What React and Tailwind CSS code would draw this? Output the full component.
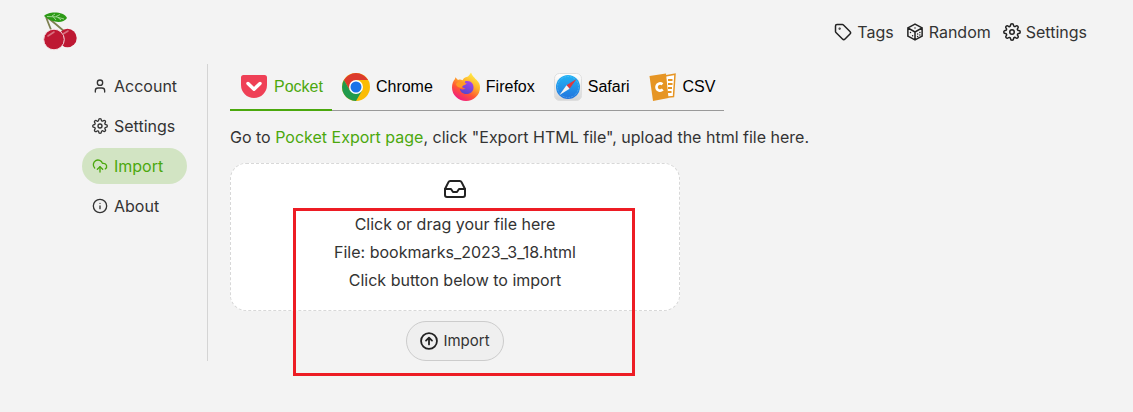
import { Tag, User, Info, Inbox, CloudUpload } from "lucide-react";
import { FiSettings } from "react-icons/fi";

function CherryLogo() {
  return (
    <svg width="36" height="40" viewBox="0 0 36 40" aria-hidden="true">
      <path d="M3 5 Q6 13 9 20 M4 5 Q14 13 22 20" fill="none" stroke="#7d8050" strokeWidth="1.8" />
      <path d="M1 4 C5 -1 21 -1 24 6 C20 12 9 11 1 4Z" fill="#2c9a16" />
      <path d="M4 4.500 Q14 4 21 7 M9 4 L12 2 M13 4.500 L17 2.500 M10 4.500 L13 8 M15 5.500 L18 8" fill="none" stroke="#b9e3ad" strokeWidth="0.800" />
      <circle cx="24.500" cy="26" r="9.200" fill="#be1833" />
      <circle cx="11" cy="27.500" r="10.300" fill="#be1833" stroke="#f3dfe2" strokeWidth="1" />
      <path d="M5 24 L11 20 M20 22 L25 19" stroke="#d8717f" strokeWidth="1.600" strokeLinecap="round" />
    </svg>
  );
}

function DiceIcon() {
  return (
    <svg width="18" height="18" viewBox="0 0 24 24" fill="none" stroke="#222" strokeWidth="2" strokeLinejoin="round" strokeLinecap="round" aria-hidden="true">
      <path d="M12 1.500 21.500 6.500v11L12 22.500 2.500 17.500v-11zM2.500 6.500 12 12l9.500-5.500M12 12v10.500" />
      <path d="M12 6.500v.1M6 12.500v.1M8.800 17v.1M15.500 14.500v.1M18.500 12.500v.1M15.500 18v.1M18.500 16v.1" />
    </svg>
  );
}

function ArrowUpCircle() {
  return (
    <svg width="18" height="18" viewBox="0 0 24 24" fill="none" stroke="#222" strokeWidth="2.400" strokeLinecap="round" strokeLinejoin="round" aria-hidden="true">
      <circle cx="12" cy="12" r="10.600" />
      <path d="M12 16.500V8M8 11.500l4-4 4 4" />
    </svg>
  );
}

function PocketLogo() {
  return (
    <svg width="28" height="28" viewBox="0 0 28 28" aria-hidden="true">
      <path d="M3.500 2h21A2.500 2.500 0 0 1 27 4.500V12a13 13 0 0 1-26 0V4.500A2.500 2.500 0 0 1 3.500 2Z" fill="#ef4056" />
      <path d="M8 10.500l6 5.700 6-5.700" fill="none" stroke="#fff" strokeWidth="3.400" strokeLinecap="round" strokeLinejoin="round" />
    </svg>
  );
}

function ChromeLogo() {
  return (
    <svg width="28" height="28" viewBox="0 0 28 28" aria-hidden="true">
      <circle cx="14" cy="14" r="14" fill="#fbbc04" />
      <path d="M14 14 8 17.500 1.900 7A14 14 0 0 1 26.100 7H14Z" fill="#dc3a2c" />
      <path d="M1.900 7A14 14 0 0 0 14 28l6.100-10.500L14 14 8 17.500Z" fill="#219a4c" />
      <circle cx="14" cy="14" r="7" fill="#fff" />
      <circle cx="14" cy="14" r="5.500" fill="#1a73e8" />
    </svg>
  );
}

function FirefoxLogo() {
  return (
    <svg width="28" height="30" viewBox="1 0 28 30" aria-hidden="true">
      <defs>
        <linearGradient id="flame" x1="0.800" y1="0.050" x2="0.250" y2="1">
          <stop offset="0" stopColor="#fff04a" />
          <stop offset="0.350" stopColor="#ffb32a" />
          <stop offset="0.650" stopColor="#ff5634" />
          <stop offset="1" stopColor="#f0148a" />
        </linearGradient>
        <linearGradient id="globe" x1="0.700" y1="0" x2="0.300" y2="1">
          <stop offset="0" stopColor="#a545ee" />
          <stop offset="1" stopColor="#5547c8" />
        </linearGradient>
      </defs>
      <path d="M20 0.500c1 3 3 4.500 4.500 6.500 1 .6 1.500 1.500 1.500 1.500C28 10.500 29 12 29 15.500a14 13.500 0 0 1-28 0C1 12 2 9 4 7l.3-1.800L7 8c2-.7 3-.5 4.500.2C13 5.500 15 5 17 4.500 18 3.500 19 2 20 .5Z" fill="url(#flame)" />
      <path d="M16.500 9c4 0 6 3 6 6.500 0 4-3 6.500-7 6.500s-6.500-2.500-6.700-5.500c1.500 1.300 4 1.300 5.700 0-2-.3-3.500-1.200-3.700-2.500 1.500-.8 3.200-.8 4-2-1.300-.6-1-2-.3-3Z" fill="url(#globe)" />
      <path d="M5 12c1.500-2 4-2.800 7-1.500l4 1-4 2-1.500 2.500C8 15 6 15.500 5 12Z" fill="#ff9a25" />
    </svg>
  );
}

function SafariLogo() {
  return (
    <svg width="28" height="28" viewBox="0 0 28 28" aria-hidden="true">
      <defs>
        <linearGradient id="sky" x1="0" y1="0" x2="0" y2="1">
          <stop offset="0" stopColor="#20b4f5" />
          <stop offset="1" stopColor="#2373dd" />
        </linearGradient>
        <linearGradient id="tile" x1="0" y1="0" x2="0" y2="1">
          <stop offset="0" stopColor="#ffffff" />
          <stop offset="1" stopColor="#d5d5d5" />
        </linearGradient>
      </defs>
      <rect x="0.500" y="0.500" width="27" height="27" rx="5" fill="url(#tile)" stroke="#dedede" />
      <circle cx="14" cy="14" r="12" fill="url(#sky)" />
      <circle cx="14" cy="14" r="10.500" fill="none" stroke="#7cc8f8" strokeWidth="0.800" strokeDasharray="0.600 1" />
      <path d="M22.500 6 12.500 12.200 15.600 15.700Z" fill="#e0383d" />
      <path d="M5.500 22 12.500 12.200 15.600 15.700Z" fill="#f4f4f4" />
    </svg>
  );
}

function CsvLogo() {
  return (
    <svg width="28" height="28" viewBox="0 0 28 28" aria-hidden="true">
      <path d="M16 3 26 1.200 24.500 23.500 15 24.500Z" fill="#fff" stroke="#e69524" strokeWidth="1.500" />
      <path d="M19 7h4.500M19 11h4.500M19 15h4M18.500 19h4" stroke="#e69524" strokeWidth="1.800" />
      <path d="M0.500 3 17 .5 19.500 25 4 28Z" fill="#e69524" />
      <path d="M13.500 11.300C11 9.300 7.300 11 7.500 14.300c.3 3.300 4 4.300 6.300 2.200" fill="none" stroke="#fff" strokeWidth="2.600" />
    </svg>
  );
}

const tabs = [
  { label: "Pocket", Logo: PocketLogo, active: true },
  { label: "Chrome", Logo: ChromeLogo },
  { label: "Firefox", Logo: FirefoxLogo },
  { label: "Safari", Logo: SafariLogo },
  { label: "CSV", Logo: CsvLogo },
];

const sections = [
  { label: "Account", Icon: User },
  { label: "Settings", Icon: FiSettings },
  { label: "Import", Icon: CloudUpload, active: true },
  { label: "About", Icon: Info },
];

export default function App() {
  return (
    <div className="min-h-screen bg-[#f3f3f3] font-['Inter',sans-serif] text-base font-normal text-[#333]">
      <header className="flex h-16 items-center justify-between pr-[46px] pl-[43px]">
        <a href="#home" aria-label="Home">
          <CherryLogo />
        </a>
        <nav className="flex gap-3">
          <a href="#tags" className="flex items-center gap-[5px]"><Tag size={18} className="text-[#222]" />Tags</a>
          <a href="#random" className="flex items-center gap-[5px]"><DiceIcon />Random</a>
          <a href="#settings" className="flex items-center gap-[5px]"><FiSettings size={18} className="text-[#222]" />Settings</a>
        </nav>
      </header>

      <div className="flex pl-[82px]">
        <nav className="flex w-[126px] shrink-0 flex-col gap-1 border-r border-[#d4d4d4] pt-1 pr-5">
          {sections.map(({ label, Icon, active }) => (
            <a
              key={label}
              href={"#" + label.toLowerCase()}
              className={active
                ? "flex h-9 items-center gap-[6px] rounded-full bg-[#d2e4c3] pl-[10px] text-[#4ba80d]"
                : "flex h-9 items-center gap-[6px] rounded-full pl-[10px]"}
            >
              <Icon size={16} />
              {label}
            </a>
          ))}
        </nav>

        <main className="flex-1 pl-[22px]">
          <div role="tablist" className="flex h-[47px] w-fit border-b border-[#999] font-['Liberation_Sans',sans-serif] text-black">
            {tabs.map(({ label, Logo, active }) => (
              <button
                key={label}
                type="button"
                role="tab"
                aria-selected={!!active}
                className={active
                  ? "-mb-px flex items-center gap-[6px] border-b-2 border-[#4ba80d] pr-[9px] pl-[10px] text-[#4ba80d]"
                  : "flex items-center gap-[6px] pr-[9px] pl-[10px]"}
              >
                <Logo />
                {label}
              </button>
            ))}
          </div>

          <p className="mt-[14px] leading-6">
            Go to <a href="#export" className="text-[#4ba80d]">Pocket Export page</a>, click "Export HTML file", upload the html file here.
          </p>

          <form className="relative mt-[14px] flex w-[450px] max-w-full flex-col items-center">
            <label className="flex w-full cursor-pointer flex-col items-center rounded-2xl border border-dashed border-[#d8d8d8] bg-white pt-[13px] pb-4 leading-7">
              <input type="file" className="sr-only" />
              <Inbox size={24} className="text-[#222]" />
              <span className="mt-[9px]">Click or drag your file here</span>
              <span>File: bookmarks_2023_3_18.html</span>
              <span>Click button below to import</span>
            </label>
            <button type="button" className="mt-[10px] flex h-10 items-center gap-[5px] rounded-full border border-[#ccc] bg-[#efefef] px-[13px] text-[15px]">
              <ArrowUpCircle />
              Import
            </button>
            <div className="pointer-events-none absolute top-[45px] left-[63px] h-[168px] w-[342px] border-3 border-[#ed1c24]" />
          </form>
        </main>
      </div>
    </div>
  );
}
